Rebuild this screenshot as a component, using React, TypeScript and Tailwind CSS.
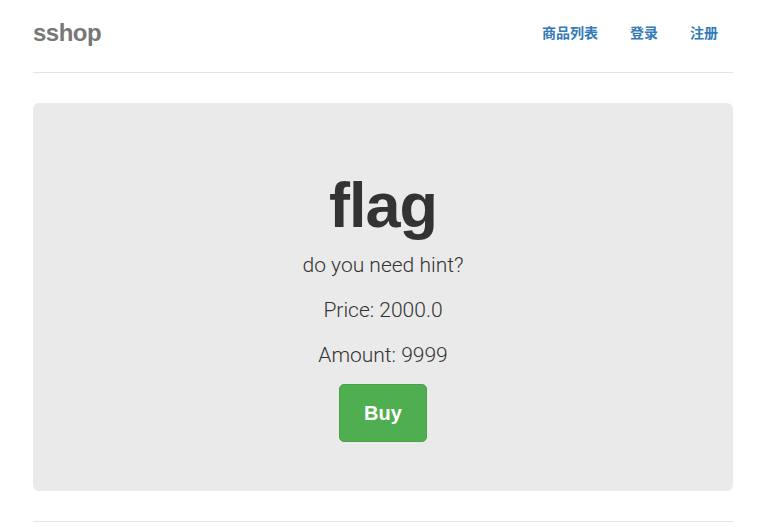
export default function App() {
  const sans = { fontFamily: '"Liberation Sans", Arial, sans-serif' };
  const cjk = { fontFamily: '"Noto Sans CJK SC", sans-serif' };
  const light = { fontFamily: 'Roboto, "Liberation Sans", sans-serif' };
  return (
    <div className="min-h-[527px] bg-white text-[#333]" style={sans}>
      <div className="w-[700px] ml-[33px]">
        <div className="flex items-center justify-between pt-[13px] pb-[19px] border-b border-[#e5e5e5]">
          <h3 className="text-[24px] leading-[40px] font-bold text-[#777] tracking-[-0.5px]">sshop</h3>
          <nav className="flex gap-[2px] -mt-[3px] text-[14px] font-semibold text-[#337ab7]" style={cjk}>
            <a className="px-[15px] py-[10px] leading-[20px]">商品列表</a>
            <a className="px-[15px] py-[10px] leading-[20px]">登录</a>
            <a className="px-[15px] py-[10px] leading-[20px]">注册</a>
          </nav>
        </div>
        <div className="mt-[30px] bg-[#eaeaea] rounded-[6px] pt-[48px] pb-[48px] px-[60px] text-center">
          <h1 className="mt-[20px] mb-[10px] text-[63px] leading-[69px] font-bold text-[#333] tracking-[-1px]">flag</h1>
          <div style={light} className="font-light">
            <p className="text-[21px] leading-[30px] mb-[15px] text-[#333]">do you need hint?</p>
            <p className="text-[21px] leading-[30px] mb-[15px] text-[#333]">Price: 2000.0</p>
            <p className="text-[21px] leading-[30px] mb-[14px] text-[#333]">Amount: 9999</p>
          </div>
          <div className="flex justify-center">
            <button className="bg-[#4fae4f] border border-[#45a345] rounded-[5px] text-white font-bold text-[20px] leading-[28px] px-[24px] py-[14px] mb-[1px]">Buy</button>
          </div>
        </div>
        <div className="mt-[30px] border-t border-[#e5e5e5] h-[10px]"></div>
      </div>
    </div>
  );
}
